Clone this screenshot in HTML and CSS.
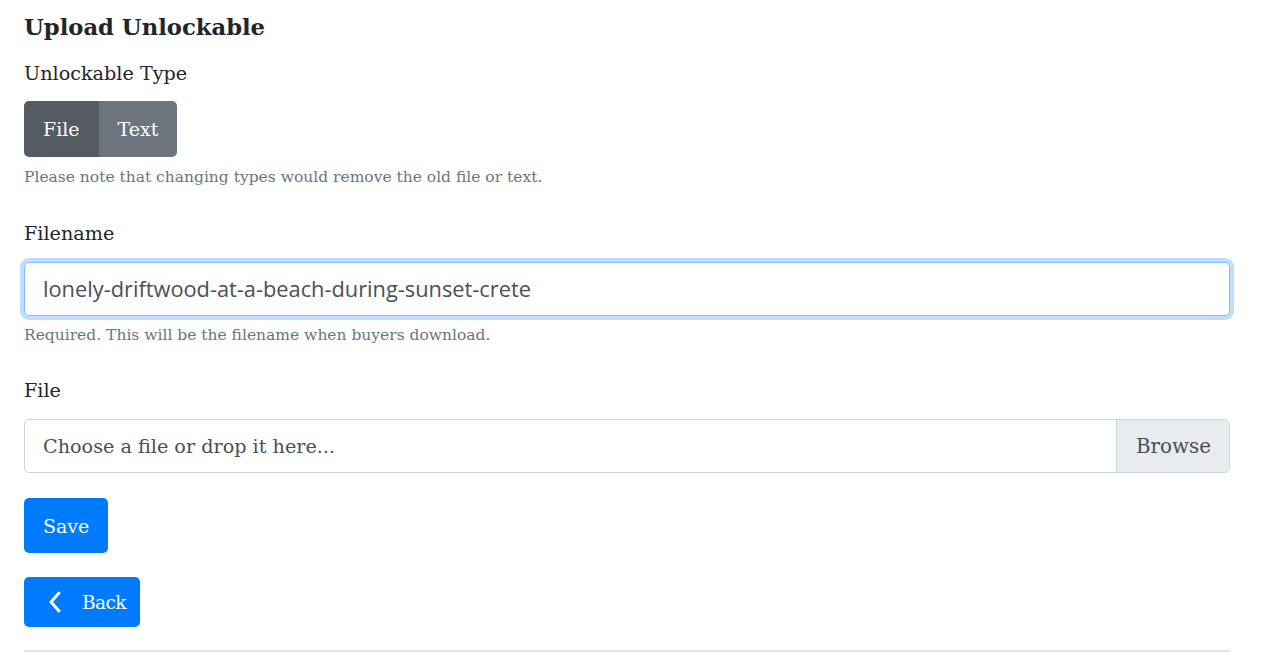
FILE: index.html
```html
<!DOCTYPE html>
<html>
<head>
<meta charset="utf-8">
<link rel="stylesheet" href="styles.css">
</head>
<body>
<div class="page">
  <h1 class="title">Upload Unlockable</h1>
  <div class="label label-type">Unlockable Type</div>
  <div class="btn-group">
    <button class="seg seg-active">File</button>
    <button class="seg">Text</button>
  </div>
  <div class="help help-type">Please note that changing types would remove the old file or text.</div>

  <div class="label label-gap">Filename</div>
  <div class="input input-focus">lonely-driftwood-at-a-beach-during-sunset-crete</div>
  <div class="help help-input">Required. This will be the filename when buyers download.</div>

  <div class="label label-gap">File</div>
  <div class="file-input">
    <div class="file-label">Choose a file or drop it here...</div>
    <div class="file-browse">Browse</div>
  </div>

  <button class="btn btn-save">Save</button>
  <button class="btn btn-back">
    <svg class="chev" width="14" height="24" viewBox="0 0 14 24"><path d="M11 3 L3 12 L11 21" fill="none" stroke="#fff" stroke-width="3" stroke-linecap="round" stroke-linejoin="round"/></svg>
    <span>Back</span>
  </button>
  <div class="rule"></div>
</div>
</body>
</html>
```

FILE: styles.css
```css
html, body {
  margin: 0;
  background: #fff;
}
.page {
  padding: 12px 50px 0 24px;
  display: flex;
  flex-direction: column;
  align-items: flex-start;
  font-family: "DejaVu Serif", serif;
  color: #212529;
}
.title {
  margin: 0 0 18px 0;
  font-size: 22.7px;
  line-height: 30px;
  font-weight: bold;
}
.label {
  font-size: 19.2px;
  line-height: 27px;
}
.label-type {
  margin-bottom: 14px;
}
.label-gap {
  margin-top: 31px;
  margin-bottom: 15px;
}
.btn-group {
  display: flex;
  height: 56px;
  border-radius: 5px;
  overflow: hidden;
}
.seg {
  border: 0;
  margin: 0;
  padding: 0 19px;
  background: #6c757d;
  color: #fff;
  font-family: "DejaVu Serif", serif;
  font-size: 19px;
}
.seg-active {
  background: #545b62;
}
.help {
  font-size: 15.5px;
  line-height: 21.6px;
  color: #6c757d;
}
.help-type {
  margin-top: 10px;
}
.help-input {
  margin-top: 9px;
}
.input {
  box-sizing: border-box;
  width: 1206px;
  height: 54px;
  border: 1px solid #ced4da;
  border-radius: 5px;
  padding: 0 18px;
  display: flex;
  align-items: center;
  font-family: "Open Sans", sans-serif;
  font-size: 21.8px;
  color: #495057;
}
.input-focus {
  border-color: #80bdff;
  box-shadow: 0 0 0 4px rgba(0, 123, 255, 0.25);
}
.file-input {
  box-sizing: border-box;
  width: 1206px;
  height: 54px;
  border: 1px solid #ced4da;
  border-radius: 5px;
  display: flex;
  overflow: hidden;
  color: #495057;
  font-size: 19.2px;
}
.file-label {
  flex: 1;
  display: flex;
  align-items: center;
  padding: 0 18px;
}
.file-browse {
  display: flex;
  align-items: center;
  padding: 0 18px 0 19px;
  font-size: 19.9px;
  background: #e9ecef;
  border-left: 1px solid #ced4da;
}
.btn {
  border: 0;
  border-radius: 5px;
  background: #007bff;
  color: #fff;
  font-family: "DejaVu Serif", serif;
  font-size: 19px;
  display: flex;
  align-items: center;
}
.btn-save {
  margin-top: 25px;
  height: 55px;
  padding: 0 19px;
}
.btn-back {
  margin-top: 24px;
  height: 50px;
  padding: 0 14px 0 24px;
  gap: 20px;
  font-size: 18.5px;
  letter-spacing: -0.6px;
}
.chev {
  display: block;
}
.rule {
  margin-top: 23px;
  width: 1206px;
  height: 2px;
  background: #e6e6e6;
}
```
